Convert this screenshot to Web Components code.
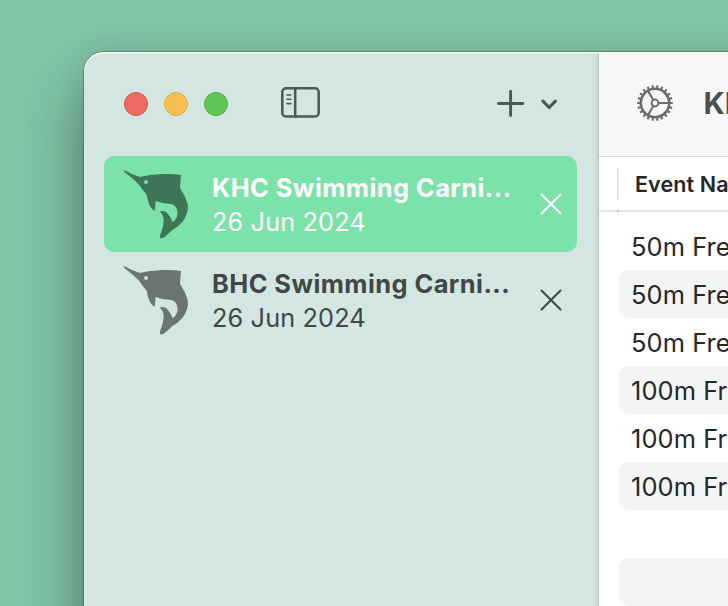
<!DOCTYPE html>
<html lang="en">
<head>
<meta charset="utf-8">
<title>Swimming Carnival</title>
<style>
html,body{margin:0;height:100%}
body{width:728px;height:606px;overflow:hidden;background:#81c4a6;font-family:Inter,"Liberation Sans",sans-serif}
</style>
</head>
<body>
<app-window>
  <side-bar slot="sidebar">
    <meet-item selected><span slot="title">KHC Swimming Carni...</span><span slot="date">26 Jun 2024</span></meet-item>
    <meet-item><span slot="title">BHC Swimming Carni...</span><span slot="date">26 Jun 2024</span></meet-item>
  </side-bar>
  <event-pane slot="content">
    <span slot="title">KH</span>
    <span slot="column">Event Na</span>
    <event-row>50m Fre</event-row>
    <event-row striped>50m Fre</event-row>
    <event-row>50m Fre</event-row>
    <event-row striped>100m Fr</event-row>
    <event-row>100m Fr</event-row>
    <event-row striped>100m Fr</event-row>
    <event-row></event-row>
    <event-row striped></event-row>
  </event-pane>
</app-window>
<script>
const define = (name, html) => customElements.define(name, class extends HTMLElement {
  constructor() {
    super();
    this.attachShadow({mode: 'open'}).innerHTML = html;
  }
});

define('app-window', `
<style>
:host{display:block;box-sizing:border-box;padding:52px 0 0 84px;height:606px;width:728px;overflow:hidden}
.win{display:flex;width:1400px;height:1000px;border-radius:20px;
  box-shadow:0 0 0 1px rgba(25,75,50,.4),0 36px 62px rgba(0,0,0,.38),0 0 30px rgba(0,0,0,.08)}
</style>
<div class="win"><slot name="sidebar"></slot><slot name="content"></slot></div>`);

define('side-bar', `
<style>
:host{display:flex;flex-direction:column;box-sizing:border-box;width:515px;flex:none;border-radius:20px 0 0 20px;
  background:linear-gradient(to left,#a9bdb5 0,#c3d6cf 1px,#cfe1dc 3px,#d4e6e2 8px);
  box-shadow:inset 1px 0 0 rgba(255,255,255,.2),inset 0 1.5px 0 rgba(255,255,255,.75);padding:0 22px 0 20px}
.bar{display:flex;align-items:center;height:104px;padding:0 19px 0 20px;box-sizing:border-box}
.dot{width:24px;height:24px;border-radius:50%;box-sizing:border-box;margin-right:16px;border:1px solid}
.r{background:#ed6b60;border-color:#dc5147}
.y{background:#f5bf50;border-color:#dba94b}
.g{background:#62c655;border-color:#50ae43}
.toggle{margin:-4px 0 0 37px}
.grow{flex:1}
svg{display:block;fill:none;stroke:#475a55;stroke-linecap:round;stroke-linejoin:round}
</style>
<div class="bar">
  <span class="dot r"></span><span class="dot y"></span><span class="dot g"></span>
  <svg class="toggle" width="39" height="31" viewBox="0 0 39 31" stroke-width="2.5"><rect x="1.3" y="1.3" width="36.4" height="28.2" rx="3.8"/><path d="M14.2 1.5V29.5"/><path stroke-width="1.6" d="M6 8h3.8M6 12.3h3.8M6 16.6h3.8"/></svg>
  <span class="grow"></span>
  <svg width="62" height="28" viewBox="0 0 62 28" stroke-width="2.9"><path d="M2.5 13.5h24.2M14.6 1.4v24.2"/><path stroke-width="3.2" d="M47 11.2l6.2 6.3 6.2-6.3"/></svg>
</div>
<slot></slot>`);

define('meet-item', `
<style>
:host{display:flex;align-items:center;box-sizing:border-box;height:96px;border-radius:10px;padding:0 15px 0 18px;color:#404745;--fish:#6a7471}
:host([selected]){background:#7be2aa;color:#fff;--fish:#3e7557}
.fish{flex:none;width:68px;height:72px;fill:var(--fish)}
.text{flex:1;margin-left:22px;padding-top:1px;white-space:nowrap;min-width:0}
.t{font-size:25.4px;line-height:34px;font-weight:700;letter-spacing:.44px}
.d{font-size:25.3px;line-height:34px;letter-spacing:.12px}
.x{flex:none;width:22px;height:22px;fill:none;stroke:currentColor;stroke-width:2;stroke-linecap:round}
</style>
<svg class="fish" viewBox="36 24 204 216"><path fill-rule="evenodd" d="M42 30L66 42L90 51Q115 44 160 42Q190 41 213 45L210 84Q225 105 233 132Q237 160 217 186Q203 202 187 210Q173 224 161 233Q152 236 150 233Q149 225 155 213Q161 195 161 180Q160 165 149 154Q158 151 167 155Q179 164 188 187Q206 173 202 152Q197 134 184 132Q157 131 137 123L134 153L127 147Q115 135 110 104Q97 90 88 75Q70 56 43 36ZM108 60Q102 61 102 66Q102 72 108 72Q114 72 114 66Q114 60 108 60Z"/></svg>
<div class="text"><div class="t"><slot name="title"></slot></div><div class="d"><slot name="date"></slot></div></div>
<svg class="x" viewBox="0 0 22 22"><path d="M1.5 1.5l19 19M20.5 1.5l-19 19"/></svg>`);

define('gear-icon', `
<style>:host{display:block;width:38px;height:38px}svg{display:block;fill:none;stroke:#6a6d6b}</style>
<svg width="38" height="38" viewBox="-19 -19 38 38">
<circle r="14.2" stroke-width="2.6"/>
<circle r="16.3" stroke-width="3" pathLength="44" stroke-dasharray=".9 1.1" stroke-dashoffset=".45"/>
<circle r="3.4" stroke-width="2"/>
<path stroke-width="2.1" d="M3.8 0H14M-1.9 -3.3L-7 -12.1M-1.9 3.3L-7 12.1"/>
</svg>`);

define('event-pane', `
<style>
:host{display:block;flex:1;background:#fff}
.bar{display:flex;align-items:center;box-sizing:border-box;height:105px;background:#f5f8f7;border-bottom:1px solid #d5d8d7;padding:0 0 2px 37px;box-shadow:inset 0 1.5px 0 #fff}
.title{font-size:29.5px;font-weight:700;color:#4c4f4e;margin-left:29.5px;line-height:36px}
.head{display:flex;align-items:center;box-sizing:border-box;height:53px;padding-left:18px}
.rule{height:2px;background:linear-gradient(to right,#e3e4e4 18px,#c6c8c7 18px 20px,#e3e4e4 20px)}
.sep{width:2px;height:32px;background:#e3e4e4}
.col{font-size:21.5px;font-weight:600;color:#262727;margin-left:16px;letter-spacing:.1px;line-height:28px;white-space:nowrap}
.rows{padding:10px 20px}
</style>
<div class="bar"><gear-icon></gear-icon><div class="title"><slot name="title"></slot></div></div>
<div class="head"><span class="sep"></span><div class="col"><slot name="column"></slot></div></div>
<div class="rule"></div>
<div class="rows"><slot></slot></div>`);

define('event-row', `
<style>
:host{display:flex;align-items:center;box-sizing:border-box;height:48px;border-radius:10px;padding:0 12px;font-size:25.4px;line-height:31px;font-weight:430;letter-spacing:.1px;color:#262727;white-space:nowrap}
:host([striped]){background:#f3f5f4}
</style><slot></slot>`);
</script>
</body>
</html>
